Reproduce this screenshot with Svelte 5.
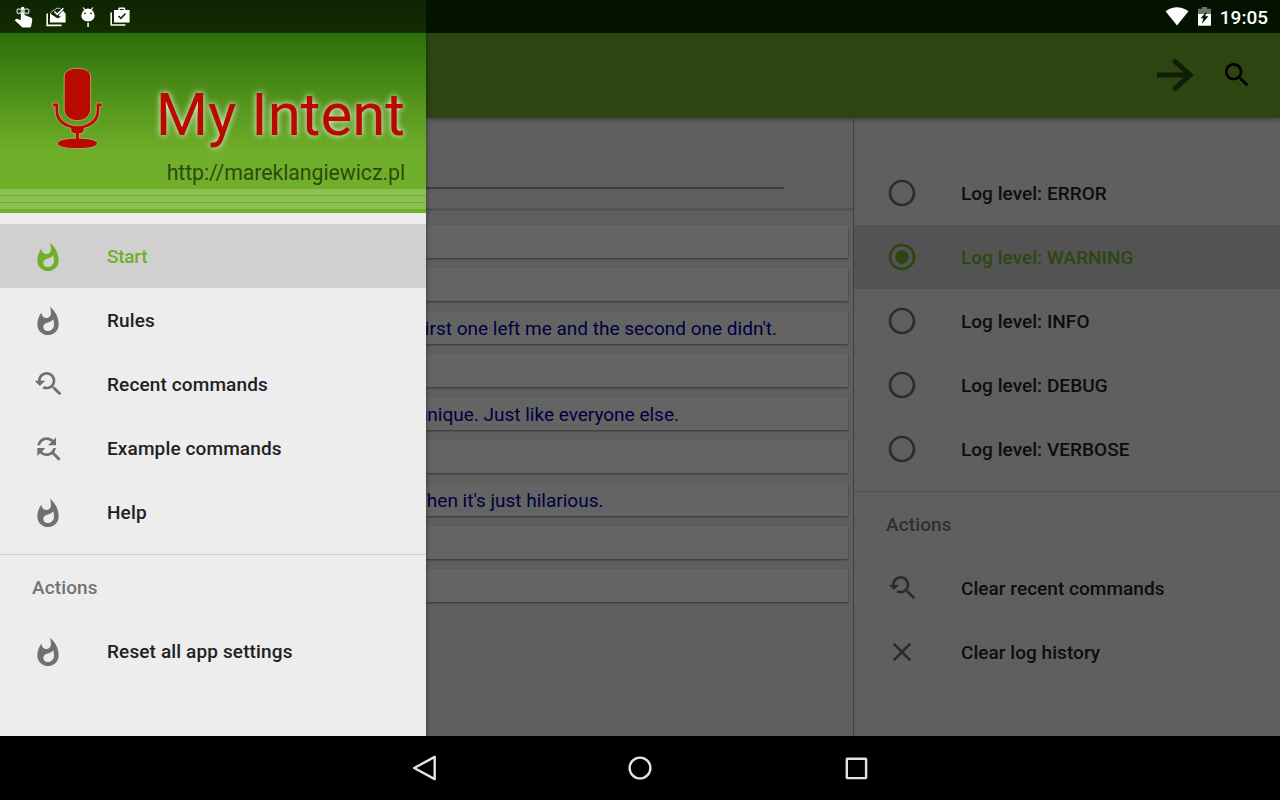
<script>
  const icons = {
    flame: 'M13.5 1.97s.74 2.65.74 4.8c0 2.06-1.35 3.73-3.41 3.73-2.07 0-3.63-1.67-3.63-3.73l.03-.36C5.21 8.81 4 11.92 4 15.3c0 4.42 3.58 8 8 8s8-3.58 8-8C20 9.91 17.41 5.1 13.5 1.97zM11.71 20.3c-1.78 0-3.22-1.4-3.22-3.14 0-1.62 1.05-2.76 2.81-3.12 1.77-.36 3.6-1.21 4.62-2.58.39 1.29.59 2.65.59 4.04 0 2.65-2.15 4.8-4.8 4.8z',
    recent: 'M17.01 14h-.8l-.27-.27c.98-1.14 1.57-2.61 1.57-4.23 0-3.59-2.91-6.5-6.5-6.5s-6.5 3-6.5 6.5H2l3.84 4 4.16-4H6.51C6.51 7 8.53 5 11.01 5s4.5 2.01 4.5 4.5c0 2.48-2.02 4.5-4.5 4.5-.65 0-1.26-.14-1.82-.38L7.71 15.1c.97.57 2.09.9 3.3.9 1.61 0 3.08-.59 4.22-1.57l.27.27v.79l5.01 4.99L22 19l-4.99-5z',
    replace: 'M11 6c1.38 0 2.63.56 3.54 1.46L12 10h6V4l-2.05 2.05C14.68 4.78 12.93 4 11 4c-3.53 0-6.43 2.61-6.92 6H6.1c.46-2.28 2.48-4 4.9-4zm5.64 9.14c.66-.9 1.12-1.97 1.28-3.14H15.9c-.46 2.28-2.48 4-4.9 4-1.38 0-2.63-.56-3.54-1.46L10 12H4v6l2.05-2.05C7.32 17.22 9.07 18 11 18c1.55 0 2.98-.51 4.14-1.36L20 21.49 21.49 20l-4.85-4.86z',
    radioOff: 'M12 2C6.48 2 2 6.48 2 12s4.48 10 10 10 10-4.48 10-10S17.52 2 12 2zm0 18c-4.42 0-8-3.58-8-8s3.58-8 8-8 8 3.58 8 8-3.58 8-8 8z',
    radioOn: 'M12 7c-2.76 0-5 2.24-5 5s2.24 5 5 5 5-2.24 5-5-2.24-5-5-5zm0-5C6.48 2 2 6.48 2 12s4.48 10 10 10 10-4.48 10-10S17.52 2 12 2zm0 18c-4.42 0-8-3.58-8-8s3.58-8 8-8 8 3.58 8 8-3.58 8-8 8z',
    clear: 'M19 6.41L17.59 5 12 10.59 6.41 5 5 6.41 10.59 12 5 17.59 6.41 19 12 13.41 17.59 19 19 17.59 13.41 12z',
    search: 'M15.5 14h-.79l-.28-.27C15.41 12.59 16 11.11 16 9.5 16 5.91 13.09 3 9.5 3S3 5.91 3 9.5 5.91 16 9.5 16c1.61 0 3.09-.59 4.23-1.57l.27.28v.79l5 4.99L20.49 19l-4.99-5zm-6 0C7.01 14 5 11.99 5 9.5S7.01 5 9.5 5 14 7.01 14 9.5 11.99 14 9.5 14z'
  };
  const navigation = [
    { icon: 'flame', label: 'Start', selected: true },
    { icon: 'flame', label: 'Rules' },
    { icon: 'recent', label: 'Recent commands' },
    { icon: 'replace', label: 'Example commands' },
    { icon: 'flame', label: 'Help' }
  ];
  const navActions = [{ icon: 'flame', label: 'Reset all app settings' }];
  const levels = [
    { icon: 'radioOff', label: 'Log level: ERROR' },
    { icon: 'radioOn', label: 'Log level: WARNING', selected: true },
    { icon: 'radioOff', label: 'Log level: INFO' },
    { icon: 'radioOff', label: 'Log level: DEBUG' },
    { icon: 'radioOff', label: 'Log level: VERBOSE' }
  ];
  const logActions = [
    { icon: 'recent', label: 'Clear recent commands' },
    { icon: 'clear', label: 'Clear log history' }
  ];
  // `end` is the space between the end of the line and the card's right edge
  const log = [
    { text: '' },
    { text: '' },
    { text: "irst one left me and the second one didn't.", end: 71 },
    { text: '' },
    { text: 'unique. Just like everyone else.', end: 169 },
    { text: '' },
    { text: "Then it's just hilarious.", end: 244.5 },
    { text: '' },
    { text: '' }
  ];
</script>

{#snippet menu(items)}
  {#each items as item}
    <div class="item" class:selected={item.selected}>
      <svg width="32" height="32" viewBox="0 0 24 24"><path d={icons[item.icon]} /></svg>
      <span>{item.label}</span>
    </div>
  {/each}
{/snippet}

<div class="device">
  <div class="window">
    <aside class="drawer">
      <header>
        <svg class="mic" width="54" height="86" viewBox="0 0 54 86">
          <g fill="#b90a00" stroke="#c5bd84" stroke-width=".7">
            <path d="M14.200 12C14.200 5.500 20.500 3.400 27.400 3.400S40.600 5.500 40.600 12V44C40.600 51.500 34 55.600 27.400 55.600S14.200 51.500 14.200 44Z" />
            <path d="M2.600 38H8.600V46C8.600 54.500 17 60.800 27.400 60.800S46.200 54.500 46.200 46V38H52.200V41.800H49.700V46C49.700 55 43 61.600 34 63.200V67.200H32.500V68.500H29.300V73.200C40 73.400 47.300 75.200 47.300 78.400C47.300 81.900 39 83.600 27.400 83.600S7.500 81.900 7.500 78.400C7.500 75.200 14.800 73.400 25.500 73.200V68.500H22.300V67.200H20.800V63.200C11.800 61.600 5.100 55 5.100 46V41.800H2.600Z" />
          </g>
        </svg>
        <div class="brand">
          <h1>My Intent</h1>
          <p>http://mareklangiewicz.pl</p>
        </div>
        <div class="stripes"><i></i><i></i><i></i></div>
      </header>
      <nav>
        {@render menu(navigation)}
        <hr />
        <h2>Actions</h2>
        {@render menu(navActions)}
      </nav>
    </aside>

    <div class="page">
      <div class="toolbar">
        <svg width="40" height="36" viewBox="0 0 40 36" fill="none" stroke="#111d04" stroke-width="5"><path d="M1 18H34M17.500 3L34 18L17.500 33" /></svg>
        <svg class="search" width="32" height="32" viewBox="0 0 24 24"><path d={icons.search} /></svg>
      </div>
      <div class="columns">
        <main>
          <div class="command"><div class="field"></div></div>
          <div class="log">
            {#each log as line}
              <div class="card" style:padding-right={`${line.end ?? 0}px`}>{line.text}</div>
            {/each}
          </div>
        </main>
        <section class="settings">
          {@render menu(levels)}
          <hr />
          <h2>Actions</h2>
          {@render menu(logActions)}
        </section>
      </div>
    </div>

    <div class="status">
      <div class="notices">
        <svg width="20" height="22" viewBox="0 0 20 22">
          <path fill="#fff" d="M6.800 2.700a1.900 1.900 0 0 1 3.800 0V9L16.800 11.500Q18.600 12.300 18.300 14L17.200 20Q16.900 21.500 15.500 21.500H8.500L.700 14.200 2.400 12.700 6.800 14Z" />
          <path fill="none" stroke="#b8c2b2" stroke-width="1.300" d="M8.700 5.200C5.500 2 3 2.300 3 5.200S5.500 8.400 8.700 5.200C11.900 2 14.900 2.300 14.900 5.200S11.900 8.400 8.700 5.200Z" />
        </svg>
        <svg width="20" height="20" viewBox="0 0 20 20">
          <path fill="none" stroke="#fff" stroke-width="1.600" d="M1.200 6.500V18.400H15.500" />
          <path fill="#fff" d="M4 6.500L11.800 11.500 19.600 6.500V15.500H4Z" />
          <path fill="none" stroke="#b8c2b2" stroke-width="1" d="M4.300 6.800L6 4.500 11 1.200 14.500 1.400" />
          <path fill="#fff" d="M16.800 3.500L19.600 6.700 14.500 9.800 12.500 8.500Z" />
          <path fill="none" stroke="#fff" stroke-width="1.600" d="M8.500 4.500L11.300 7.300 17.300 1.300" />
        </svg>
        <svg width="14" height="20" viewBox="0 0 14 20">
          <path fill="#fff" d="M2.200 0L4.300 2.200Q7 1 9.700 2.200L11.800 0 12.300.500 10.800 2.900Q13.700 4.900 13.700 8.200C13.700 12 10.800 14.300 7 14.300S.300 12 .300 8.200Q.300 4.900 3.200 2.900L1.700.500Z" />
          <path fill="#fff" d="M6.300 15.500h1.500v4.500H6.300z" />
          <circle cx="4" cy="6.300" r=".9" fill="#102804" /><circle cx="10" cy="6.300" r=".9" fill="#102804" />
        </svg>
        <svg width="20" height="20" viewBox="0 0 20 20">
          <path fill="none" stroke="#fff" stroke-width="1.600" d="M1.200 5.500V18H15.500" />
          <path fill="#fff" fill-rule="evenodd" d="M4 3H8.300V1.800Q8.300.500 9.600.500H14Q15.300.500 15.300 1.800V3H19.600V15.500H4ZM9.800 3H13.800V1.900H9.800Z" />
          <path fill="none" stroke="#102804" stroke-width="1.600" d="M8.500 9L10.900 11.400 15.500 6.500" />
        </svg>
      </div>
      <div class="system">
        <svg width="24" height="19" viewBox="0 0 24 19"><path fill="#fff" d="M.500 4.300Q12-4 23.500 4.300L12 18.600Z" /></svg>
        <svg width="13" height="20" viewBox="0 0 13 20">
          <path fill="#6b7668" d="M0 1.800H4V0H9V1.800H13V7H0Z" /><path fill="#fff" d="M0 7H13V18.700H0Z" />
          <path fill="#061300" d="M8.500 4.500L2.700 11.300H5.300L3.800 16.700L10.500 9.200H7.300Z" />
        </svg>
        <time>19:05</time>
      </div>
    </div>
  </div>

  <div class="buttons">
    <svg width="26" height="28" viewBox="0 0 26 28"><path d="M3.200 14L23.700 2.900V25.100Z" /></svg>
    <svg width="26" height="28" viewBox="0 0 26 28"><circle cx="13" cy="14" r="10.400" /></svg>
    <svg width="26" height="28" viewBox="0 0 26 28"><rect x="3.800" y="4.800" width="19.300" height="19.300" rx=".5" /></svg>
  </div>
</div>

<style>
  :global(body) { background: #000; }
  .device {
    width: 1280px;
    height: 800px;
    display: flex;
    flex-direction: column;
    overflow: hidden;
    font-family: Roboto, sans-serif;
    background: #000;
  }
  .window { position: relative; height: 736px; display: flex; background: #5f5f5f; }
  svg { display: block; flex: none; }

  .status {
    position: absolute;
    inset: 0 0 auto;
    z-index: 2;
    height: 33px;
    display: flex;
    justify-content: space-between;
    background: linear-gradient(90deg, transparent 426px, #041200 426px);
  }
  .notices { display: flex; align-items: center; gap: 12px; padding-left: 14px; }
  .notices svg:nth-child(3) { margin: 0 3px; }
  .system { display: flex; align-items: center; padding-right: 12px; color: #fff; font-weight: 500; font-size: 19px; }
  .system svg { margin-right: 9px; }
  time { line-height: 33px; padding-top: 1px; }

  .drawer { position: relative; z-index: 1; width: 426px; flex: none; background: #ededed; box-shadow: 0 0 5px rgba(0, 0, 0, .45); }
  header {
    height: 213px;
    box-sizing: border-box;
    display: flex;
    flex-wrap: wrap;
    align-content: flex-start;
    justify-content: space-between;
    background: linear-gradient(#0c2400, #152d04 33px, transparent 33px), linear-gradient(#266207 0, #2d6e0a 33px, #4b8c18 88px, #70af29 153px);
    padding-top: 65px;
  }
  .mic { margin-left: 50px; }
  .brand { width: 300px; height: 124px; padding-right: 21px; text-align: right; }
  h1 {
    margin: 15px 0 0;
    font-size: 60px;
    line-height: 70px;
    font-weight: 400;
    color: #b90a00;
    white-space: nowrap;
    text-shadow: 0 0 6px #fff;
  }
  .brand p { margin: 10px 0 0; font-size: 21.33px; line-height: 25px; letter-spacing: -.08px; color: #2d4a11; }
  .stripes { width: 100%; display: flex; flex-direction: column; gap: 1px; }
  .stripes i { height: 6px; background: #8bc153; }
  nav { padding-top: 11px; }

  .item { height: 64px; display: flex; align-items: center; gap: 43px; padding-left: 32px; font-weight: 500; font-size: 19px; letter-spacing: .13px; color: #212121; }
  .item svg { fill: #707070; }
  .item.selected { background: #d0d0d0; color: #70af29; }
  .drawer .item.selected { letter-spacing: -.25px; }
  .item.selected svg { fill: #70af29; }
  hr { margin: 10px 0 0; border: 0; height: 1px; background: #cfcfcf; }
  h2 { margin: 0; height: 64px; padding-left: 32px; font-size: 19px; line-height: 66px; letter-spacing: .13px; font-weight: 500; color: #737373; }

  .page { flex: 1; display: flex; flex-direction: column; padding-top: 33px; }
  .toolbar {
    position: relative;
    height: 85px;
    box-sizing: border-box;
    display: flex;
    justify-content: flex-end;
    align-items: center;
    gap: 25px;
    padding: 0 27px 2px 0;
    background: #2d4611;
    box-shadow: 0 1px 5px rgba(0, 0, 0, .4);
  }
  .columns { flex: 1; display: flex; }
  main { width: 427px; border-right: 1px solid #404040; display: flex; flex-direction: column; }
  .command { height: 90px; border-bottom: 3px solid #545454; display: flex; align-items: flex-end; }
  .field { width: 358px; height: 2px; margin-bottom: 19px; background: #3c3c3c; }
  .log { display: flex; flex-direction: column; gap: 10px; padding: 14px 5px 4px 0; overflow: hidden; }
  .card {
    height: 33px;
    box-sizing: border-box;
    display: flex;
    justify-content: flex-end;
    align-items: center;
    padding-top: 2px;
    white-space: nowrap;
    font-size: 19px;
    color: #000040;
    background: #646464;
    box-shadow: 0 1px 2px rgba(0, 0, 0, .45);
  }
  .settings { flex: 1; padding-top: 43px; }
  .settings .item { color: #0d0d0d; letter-spacing: .04px; }
  .settings .item svg { fill: #2c2c2c; }
  .settings .item.selected { background: #535353; color: #2d4611; }
  .settings .item.selected svg { fill: #2d4611; }
  .settings hr { background: #535353; }
  .settings h2 { color: #2e2e2e; }

  .buttons { height: 64px; display: flex; justify-content: center; align-items: center; gap: 190px; background: #000; }
  .buttons svg { fill: none; stroke: #e3e3e3; stroke-width: 2.4; stroke-linejoin: round; }
</style>
